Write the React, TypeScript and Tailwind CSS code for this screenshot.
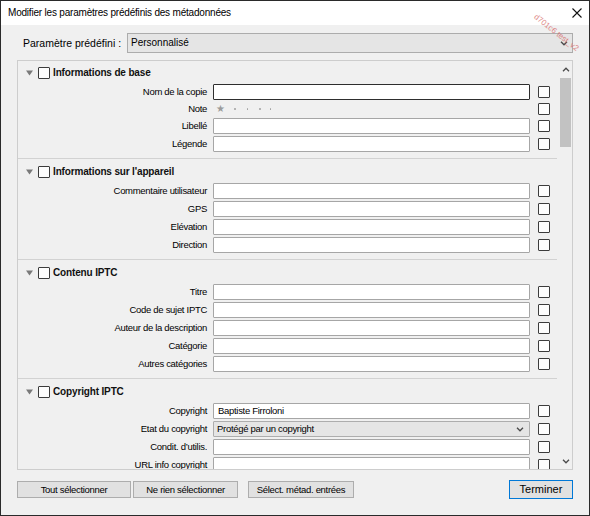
import React from 'react';

// Shared styles
const uiFont = "font-['Liberation_Sans',Arial,sans-serif]";
const labelText = 'text-[9.5px] tracking-[-0.3px] text-[#000]';

interface Field {
  label: string;
  kind?: 'input' | 'rating' | 'select';
  value?: string;
  focused?: boolean;
}

interface Section {
  title: string;
  fields: Field[];
  last?: boolean;
}

const sections: Section[] = [
  {
    title: 'Informations de base',
    fields: [
      { label: 'Nom de la copie', focused: true },
      { label: 'Note', kind: 'rating' },
      { label: 'Libellé' },
      { label: 'Légende' },
    ],
  },
  {
    title: "Informations sur l'appareil",
    fields: [
      { label: 'Commentaire utilisateur' },
      { label: 'GPS' },
      { label: 'Elévation' },
      { label: 'Direction' },
    ],
  },
  {
    title: 'Contenu IPTC',
    fields: [
      { label: 'Titre' },
      { label: 'Code de sujet IPTC' },
      { label: 'Auteur de la description' },
      { label: 'Catégorie' },
      { label: 'Autres catégories' },
    ],
  },
  {
    title: 'Copyright IPTC',
    last: true,
    fields: [
      { label: 'Copyright', value: 'Baptiste Firroloni' },
      { label: 'Etat du copyright', kind: 'select', value: 'Protégé par un copyright' },
      { label: 'Condit. d’utilis.' },
      { label: 'URL info copyright' },
    ],
  },
];

const Chevron = ({ up = false, className = '' }: { up?: boolean; className?: string }) => (
  <svg width="8" height="5" viewBox="0 0 8 5" className={className}>
    <path
      d={up ? 'M1 4.2 L4 1.2 L7 4.2' : 'M1 0.8 L4 3.8 L7 0.8'}
      fill="none"
      stroke="#4a4a4a"
      strokeWidth="1.3"
    />
  </svg>
);

const Checkbox = () => (
  <div className="h-[12px] w-[12px] shrink-0 rounded-[1px] border border-[#3c3c3c] bg-[#fdfdfd]" />
);

const FieldRow = ({ field }: { field: Field }) => {
  const isRating = field.kind === 'rating';
  return (
    <div className={`flex items-center ${isRating ? 'h-[14px]' : 'h-[16px]'}`}>
      <div className={`w-[189px] shrink-0 text-right leading-none ${labelText}`}>{field.label}</div>
      <div className="ml-[6px] w-[317px] shrink-0">
        {isRating && (
          <div className="flex items-center pl-[3px]">
            <span className="text-[10px] leading-none text-[#9b9b9b]">★</span>
            <span className="ml-[9px] h-[1.5px] w-[1.5px] rounded-full bg-[#a0a0a0]" />
            <span className="ml-[11px] h-[1.5px] w-[1.5px] rounded-full bg-[#a0a0a0]" />
            <span className="ml-[11px] h-[1.5px] w-[1.5px] rounded-full bg-[#a0a0a0]" />
            <span className="ml-[9px] h-[1.5px] w-[1.5px] rounded-full bg-[#a0a0a0]" />
          </div>
        )}
        {field.kind === 'select' && (
          <div className="flex h-[16px] items-center justify-between rounded-[1px] border border-[#adadad] bg-[#e5e5e5] pl-[3px] pr-[5px]">
            <span className={`leading-none ${labelText}`}>{field.value}</span>
            <Chevron />
          </div>
        )}
        {!field.kind && (
          <div
            className={`flex h-[16px] items-center rounded-[1px] border bg-white pl-[4px] ${
              field.focused ? 'border-[#2e2e2e]' : 'border-[#a6a6a6]'
            }`}
          >
            <span className={`leading-none ${labelText}`}>{field.value}</span>
          </div>
        )}
      </div>
      <div className="ml-[8px]">
        <Checkbox />
      </div>
    </div>
  );
};

const SectionBlock = ({ section, first }: { section: Section; first: boolean }) => (
  <div
    className={`${first ? 'pt-[4px]' : 'pt-[5px]'} pb-[6px] ${
      section.last ? '' : 'border-b border-[#d2d2d2]'
    }`}
  >
    <div className="flex h-[16px] items-center pl-[8px]">
      <svg width="7" height="6" viewBox="0 0 7 6">
        <path d="M0 0.5 H7 L3.5 5.5 Z" fill="#7a7a7a" />
      </svg>
      <div className="ml-[5px]">
        <Checkbox />
      </div>
      <span className="ml-[3px] text-[10px] font-bold leading-none tracking-[-0.15px] text-[#111]">
        {section.title}
      </span>
    </div>
    <div className="mt-[3px] flex flex-col gap-[2px]">
      {section.fields.map((f) => (
        <FieldRow key={f.label} field={f} />
      ))}
    </div>
  </div>
);

export default function App() {
  return (
    <div
      className={`relative flex h-[516px] w-[590px] flex-col overflow-hidden border border-[#2a2a2a] bg-[#f0f0f0] ${uiFont}`}
    >
      {/* Title bar */}
      <div className="flex h-[24px] shrink-0 items-center justify-between bg-white pl-[7px] pr-[6px]">
        <span className="text-[10px] leading-none tracking-[-0.2px] text-black">
          Modifier les paramètres prédéfinis des métadonnées
        </span>
        <svg width="10" height="10" viewBox="0 0 10 10" className="mr-[1px]">
          <path d="M0.5 0.5 L9.5 9.5 M9.5 0.5 L0.5 9.5" stroke="#111" strokeWidth="1.1" />
        </svg>
      </div>

      <div className="flex flex-1 flex-col px-[16px]">
        {/* Preset selector */}
        <div className="mt-[8px] flex h-[20px] items-center">
          <span className="w-[110px] shrink-0 pl-[6px] text-[10.5px] leading-none text-black">
            Paramètre prédéfini :
          </span>
          <div className="flex h-[20px] flex-1 items-center justify-between border border-[#acacac] bg-[#e5e5e5] pl-[3px] pr-[4px]">
            <span className="text-[10px] leading-none text-black">Personnalisé</span>
            <Chevron />
          </div>
        </div>

        {/* Metadata panel */}
        <div className="mt-[7px] flex h-[410px] border border-[#cdcdcd]">
          <div className="flex-1 overflow-hidden">
            {sections.map((s, i) => (
              <SectionBlock key={s.title} section={s} first={i === 0} />
            ))}
          </div>
          <div className="flex w-[15px] shrink-0 flex-col">
            <div className="flex h-[16px] items-center justify-center pl-[2px]">
              <Chevron up />
            </div>
            <div className="flex-1 pl-[3px]">
              <div className="mt-[1px] h-[69px] w-[11px] bg-[#c2c2c2]" />
            </div>
            <div className="flex h-[16px] items-center justify-center pl-[2px]">
              <Chevron />
            </div>
          </div>
        </div>

        {/* Buttons */}
        <div className="mt-[10px] flex h-[19px] items-center">
          <button className={`h-[17px] w-[114px] border border-[#adadad] bg-[#e1e1e1] leading-none ${labelText}`}>
            Tout sélectionner
          </button>
          <button className={`ml-[2px] h-[17px] w-[105px] border border-[#adadad] bg-[#e1e1e1] leading-none ${labelText}`}>
            Ne rien sélectionner
          </button>
          <button className={`ml-[10px] h-[17px] w-[106px] border border-[#adadad] bg-[#e1e1e1] leading-none ${labelText}`}>
            Sélect. métad. entrées
          </button>
          <button className="ml-auto h-[19px] w-[64px] border border-[#0078d7] bg-[#e1e1e1] text-[11px] leading-none text-black">
            Terminer
          </button>
        </div>
      </div>

      {/* Watermark overlay */}
      <div className="pointer-events-none absolute left-[528px] top-[28px] rotate-[38deg] whitespace-nowrap text-[8px] leading-none text-[#d76a6a] opacity-80">
        d701c6 test_v2
      </div>
    </div>
  );
}
